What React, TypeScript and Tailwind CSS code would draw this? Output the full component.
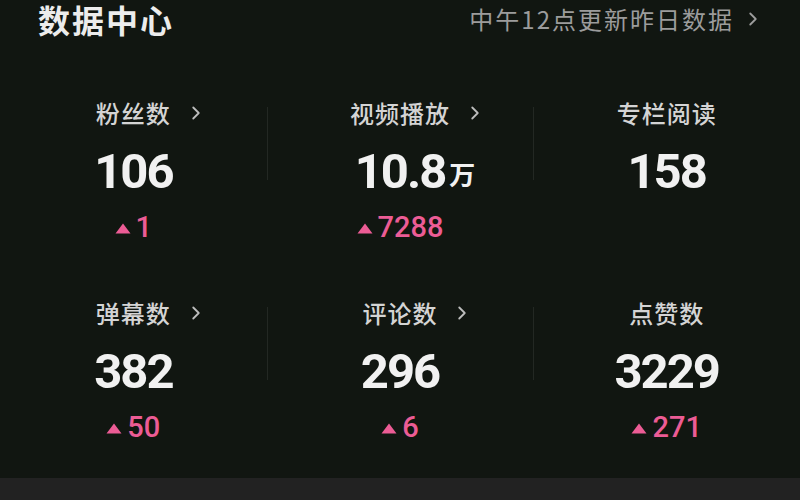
import { ChevronRight } from "lucide-react"

type Stat = {
  label: string
  value: string
  unit?: string
  delta?: string
  link?: boolean
}

const rows: Stat[][] = [
  [
    { label: "粉丝数", value: "106", delta: "1", link: true },
    { label: "视频播放", value: "10.8", unit: "万", delta: "7288", link: true },
    { label: "专栏阅读", value: "158" },
  ],
  [
    { label: "弹幕数", value: "382", delta: "50", link: true },
    { label: "评论数", value: "296", delta: "6", link: true },
    { label: "点赞数", value: "3229", delta: "271" },
  ],
]

const cjk = "font-['Noto_Sans_CJK_SC','Noto_Sans',sans-serif]"
const num = "font-['Roboto','Liberation_Sans','Noto_Sans_CJK_SC',sans-serif]"

function StatCell({ stat, divider }: { stat: Stat; divider: boolean }) {
  return (
    <div className="relative flex flex-col items-center">
      {divider && <span className="absolute left-0 top-[9px] h-[73px] w-px bg-[#232823]" />}
      <div className={`relative flex h-[30px] items-center text-[24px] font-medium leading-none tracking-[1px] text-[#d4d4d4] ${cjk}`}>
        {stat.label}
        {stat.link && (
          <ChevronRight className="absolute left-full top-[4px] ml-[14px] h-[22px] w-[22px] text-[#bdbdbd]" strokeWidth={2} />
        )}
      </div>
      <div className="relative mt-[16px] flex h-[54px] items-center">
        <span className={`text-[49px] font-bold leading-none tracking-[-2px] text-[#f1f1f1] ${num}`}>{stat.value}</span>
        {stat.unit && (
          <span className={`absolute left-full top-[17px] ml-[4px] text-[26px] font-bold leading-none text-[#f1f1f1] ${cjk}`}>{stat.unit}</span>
        )}
      </div>
      <div className="mt-[12px] flex h-[34px] items-center gap-[5px]">
        {stat.delta && (
          <>
            <svg width="16" height="11" viewBox="0 0 16 11" className="mt-[2px]">
              <path d="M8 0.5 L15.5 10.5 L0.5 10.5 Z" fill="#ec5c95" />
            </svg>
            <span className={`text-[29px] font-medium leading-none text-[#ec5c95] ${num}`}>{stat.delta}</span>
          </>
        )}
      </div>
    </div>
  )
}

export default function App() {
  return (
    <div className="flex h-[500px] w-[800px] flex-col overflow-hidden bg-[#111611]">
      <header className="flex h-[38px] items-center justify-between pl-[38px] pr-[36px]">
        <h1 className={`text-[32px] font-bold leading-[38px] tracking-[2px] text-[#ececec] ${cjk}`}>数据中心</h1>
        <div className={`flex items-center text-[24px] leading-none tracking-[2px] text-[#9c9c9c] ${cjk}`}>
          中午12点更新昨日数据
          <ChevronRight className="ml-[8px] h-[22px] w-[22px]" strokeWidth={2} />
        </div>
      </header>

      <main className="flex flex-1 flex-col gap-[54px] pt-[60px]">
        {rows.map((row, i) => (
          <div key={i} className="grid grid-cols-3">
            {row.map((s, j) => (
              <StatCell key={s.label} stat={s} divider={j > 0} />
            ))}
          </div>
        ))}
      </main>

      <div className="h-[22px] bg-[#222222]" />
    </div>
  )
}
